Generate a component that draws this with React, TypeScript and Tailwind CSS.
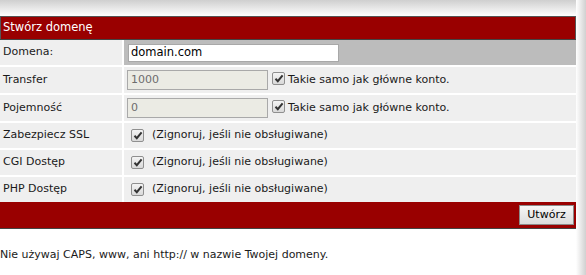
import React from "react";

function Check() {
  return (
    <span className="inline-flex h-[13px] w-[13px] shrink-0 items-center justify-center rounded-[2px] border border-[#8f8f8f] bg-gradient-to-b from-[#f4f4f4] to-[#d9d9d9]">
      <svg width="10" height="9" viewBox="0 0 10 9">
        <path d="M1.5 4.8 L3.8 7.2 L8.6 1.4" fill="none" stroke="#333" strokeWidth="2" />
      </svg>
    </span>
  );
}

const ignoreRows = ["Zabezpiecz SSL", "CGI Dostęp", "PHP Dostęp"];

export default function App() {
  return (
    <div className="flex h-[275px] w-[586px] bg-white text-[11px] text-[#1a1a1a] [font-family:'DejaVu_Sans',Verdana,sans-serif]">
      <div className="flex w-[576px] flex-col">
        <div className="h-[16px] bg-gradient-to-b from-[#cfcfcf] to-white" />
        <div className="border border-[#555] border-b-0">
          <div className="flex h-[22px] items-center bg-[#990000] pl-[2px] text-[11.5px] text-white">
            Stwórz domenę
          </div>
        </div>
        <div className="flex flex-col border-t border-[#444]">
          <div className="flex h-[25px]">
            <div className="flex w-[122px] items-center bg-[#efefef] pl-[3px]">Domena:</div>
            <div className="flex flex-1 items-center border-l-[2px] border-white bg-[#bcbcbc] pl-[4px]">
              <div className="flex h-[18px] w-[211px] items-center border border-[#a8a8a8] bg-white pl-[2px] text-[11.5px] text-black">
                domain.com
              </div>
            </div>
          </div>
          {[
            ["Transfer", "1000"],
            ["Pojemność", "0"],
          ].map(([label, val]) => (
            <div key={label} className="flex h-[28px] border-t-[2px] border-white bg-[#efefef]">
              <div className="flex w-[122px] items-center pl-[3px]">{label}</div>
              <div className="flex flex-1 items-center gap-[3px] border-l-[2px] border-white pl-[3px]">
                <div className="flex h-[20px] w-[141px] items-center border border-[#a9a9a9] bg-[#ebebe4] pl-[3px] text-[11px] text-[#6d6d6d]">
                  {val}
                </div>
                <span className="ml-[1px]">
                  <Check />
                </span>
                <span>Takie samo jak główne konto.</span>
              </div>
            </div>
          ))}
          {ignoreRows.map((label) => (
            <div key={label} className="flex h-[27px] border-t-[2px] border-white bg-[#efefef]">
              <div className="flex w-[122px] items-center pl-[3px]">{label}</div>
              <div className="flex flex-1 items-center gap-[8px] border-l-[2px] border-white pl-[7px]">
                <Check />
                <span>(Zignoruj, jeśli nie obsługiwane)</span>
              </div>
            </div>
          ))}
          <div className="flex h-[27px] items-center justify-end border-b border-[#444] bg-[#990000] pr-[2px]">
            <button className="flex h-[20px] w-[55px] items-center justify-center border border-[#8a8a8a] bg-gradient-to-b from-[#f6f6f6] to-[#dcdcdc] text-[11px] text-black">
              Utwórz
            </button>
          </div>
        </div>
        <div className="mt-[18px] text-[11px]">Nie używaj CAPS, www, ani http:// w nazwie Twojej domeny.</div>
      </div>
      <div className="w-[10px] bg-gradient-to-r from-white via-[#e8e8e8] to-[#d0d0d0]" />
    </div>
  );
}
